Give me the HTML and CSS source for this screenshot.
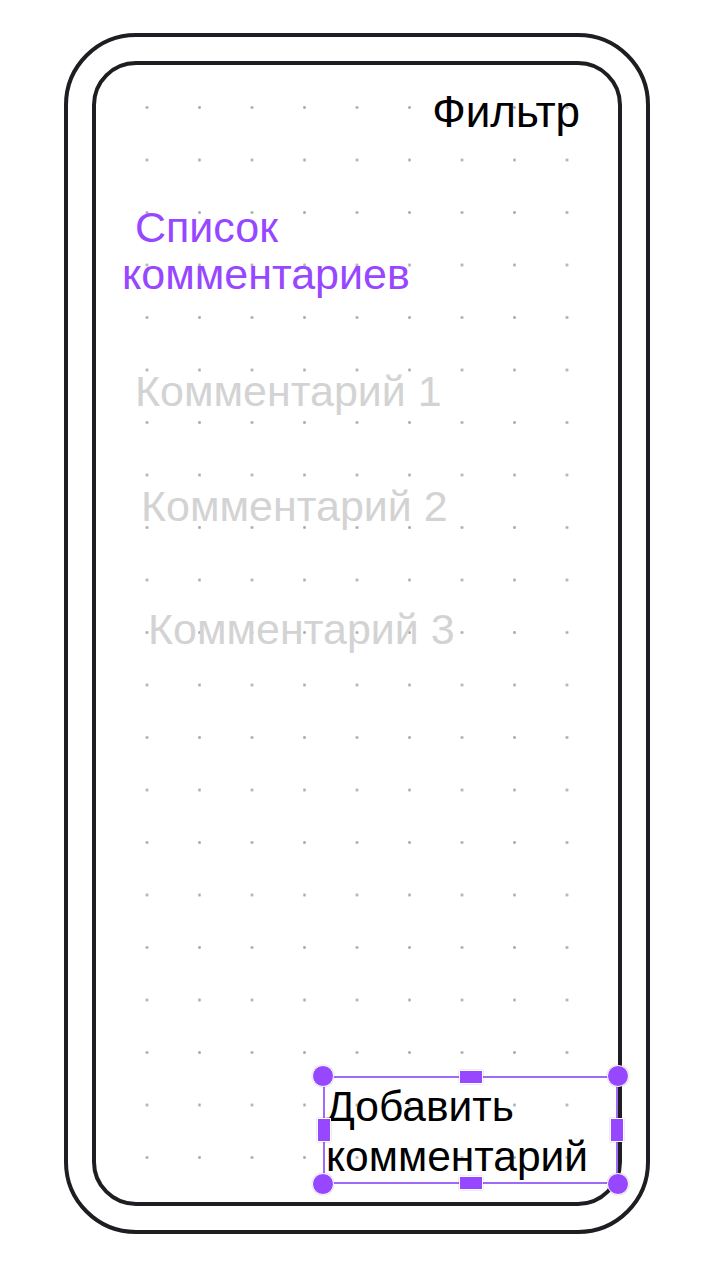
FILE: index.html
```html
<!DOCTYPE html>
<html lang="ru">
<head>
<meta charset="utf-8">
<title>Список комментариев</title>
<link rel="stylesheet" href="styles.css">
</head>
<body>
  <div class="device">
    <div class="screen">
      <div class="top-bar">
        <span class="filter">Фильтр</span>
      </div>
      <h1 class="list-title">Список комментариев</h1>
      <div class="comment comment--1">Комментарий 1</div>
      <div class="comment comment--2">Комментарий 2</div>
      <div class="comment comment--3">Комментарий 3</div>
      <div class="add-box">
        <span class="add-text">Добавить<br>комментарий</span>
        <span class="handle corner corner--tl"></span>
        <span class="handle corner corner--tr"></span>
        <span class="handle corner corner--bl"></span>
        <span class="handle corner corner--br"></span>
        <span class="handle edge edge--t"></span>
        <span class="handle edge edge--b"></span>
        <span class="handle edge edge--l"></span>
        <span class="handle edge edge--r"></span>
      </div>
    </div>
  </div>
</body>
</html>
```

FILE: styles.css
```css
* {
  box-sizing: border-box;
}

html, body {
  margin: 0;
  padding: 0;
  background: #ffffff;
}

body {
  width: 717px;
  height: 1280px;
  padding: 33px 0 0 64px;
  font-family: "Liberation Sans", Arial, sans-serif;
}

.device {
  width: 586px;
  height: 1201px;
  border: 4px solid #1c1e21;
  border-radius: 72px;
  padding: 24px;
}

.screen {
  height: 100%;
  border: 4px solid #1c1e21;
  border-radius: 44px;
  padding: 22px 0 18px 0;
  display: flex;
  flex-direction: column;
  background-color: #ffffff;
  background-image: radial-gradient(circle, #a8a8a8 0, #b4b4b4 1.1px, rgba(255,255,255,0) 1.9px);
  background-size: 52.5px 52.5px;
  background-position: 24.75px 16.25px;
}

.top-bar {
  display: flex;
  justify-content: flex-end;
  padding-right: 38px;
}

.filter {
  font-size: 44px;
  line-height: 50px;
  color: #000000;
}

.list-title {
  margin: 67px 0 0 0;
  padding-left: 26px;
  width: 340px;
  text-indent: 13px;
  font-size: 43px;
  font-weight: normal;
  line-height: 47px;
  color: #9747ff;
}

.comment {
  font-size: 43px;
  line-height: 50px;
  color: #d3d3d3;
}

.comment--1 {
  margin-top: 68px;
  padding-left: 39px;
}

.comment--2 {
  margin-top: 65px;
  padding-left: 45px;
}

.comment--3 {
  margin-top: 73px;
  padding-left: 52px;
}

.add-box {
  position: relative;
  margin-top: auto;
  align-self: flex-end;
  width: 295px;
  height: 108px;
  border: 2px solid #a06af8;
  padding: 4px 0 0 1px;
}

.add-text {
  display: block;
  font-size: 42.5px;
  line-height: 50px;
  color: #000000;
}

.handle {
  position: absolute;
  background: #9747ff;
  border: 1.5px solid #ffffff;
  box-shadow: 0 0 1.5px rgba(0, 0, 0, 0.25);
}

.corner {
  width: 22px;
  height: 22px;
  border-radius: 50%;
}

.corner--tl { left: -13px; top: -13px; }
.corner--tr { right: -13px; top: -13px; }
.corner--bl { left: -13px; bottom: -13px; }
.corner--br { right: -13px; bottom: -13px; }

.edge--t,
.edge--b {
  width: 24px;
  height: 14px;
  left: calc(50% - 12px);
}

.edge--t { top: -8px; }
.edge--b { bottom: -8px; }

.edge--l,
.edge--r {
  width: 14px;
  height: 24px;
  top: calc(50% - 12px);
}

.edge--l { left: -8px; }
.edge--r { right: -8px; }
```
